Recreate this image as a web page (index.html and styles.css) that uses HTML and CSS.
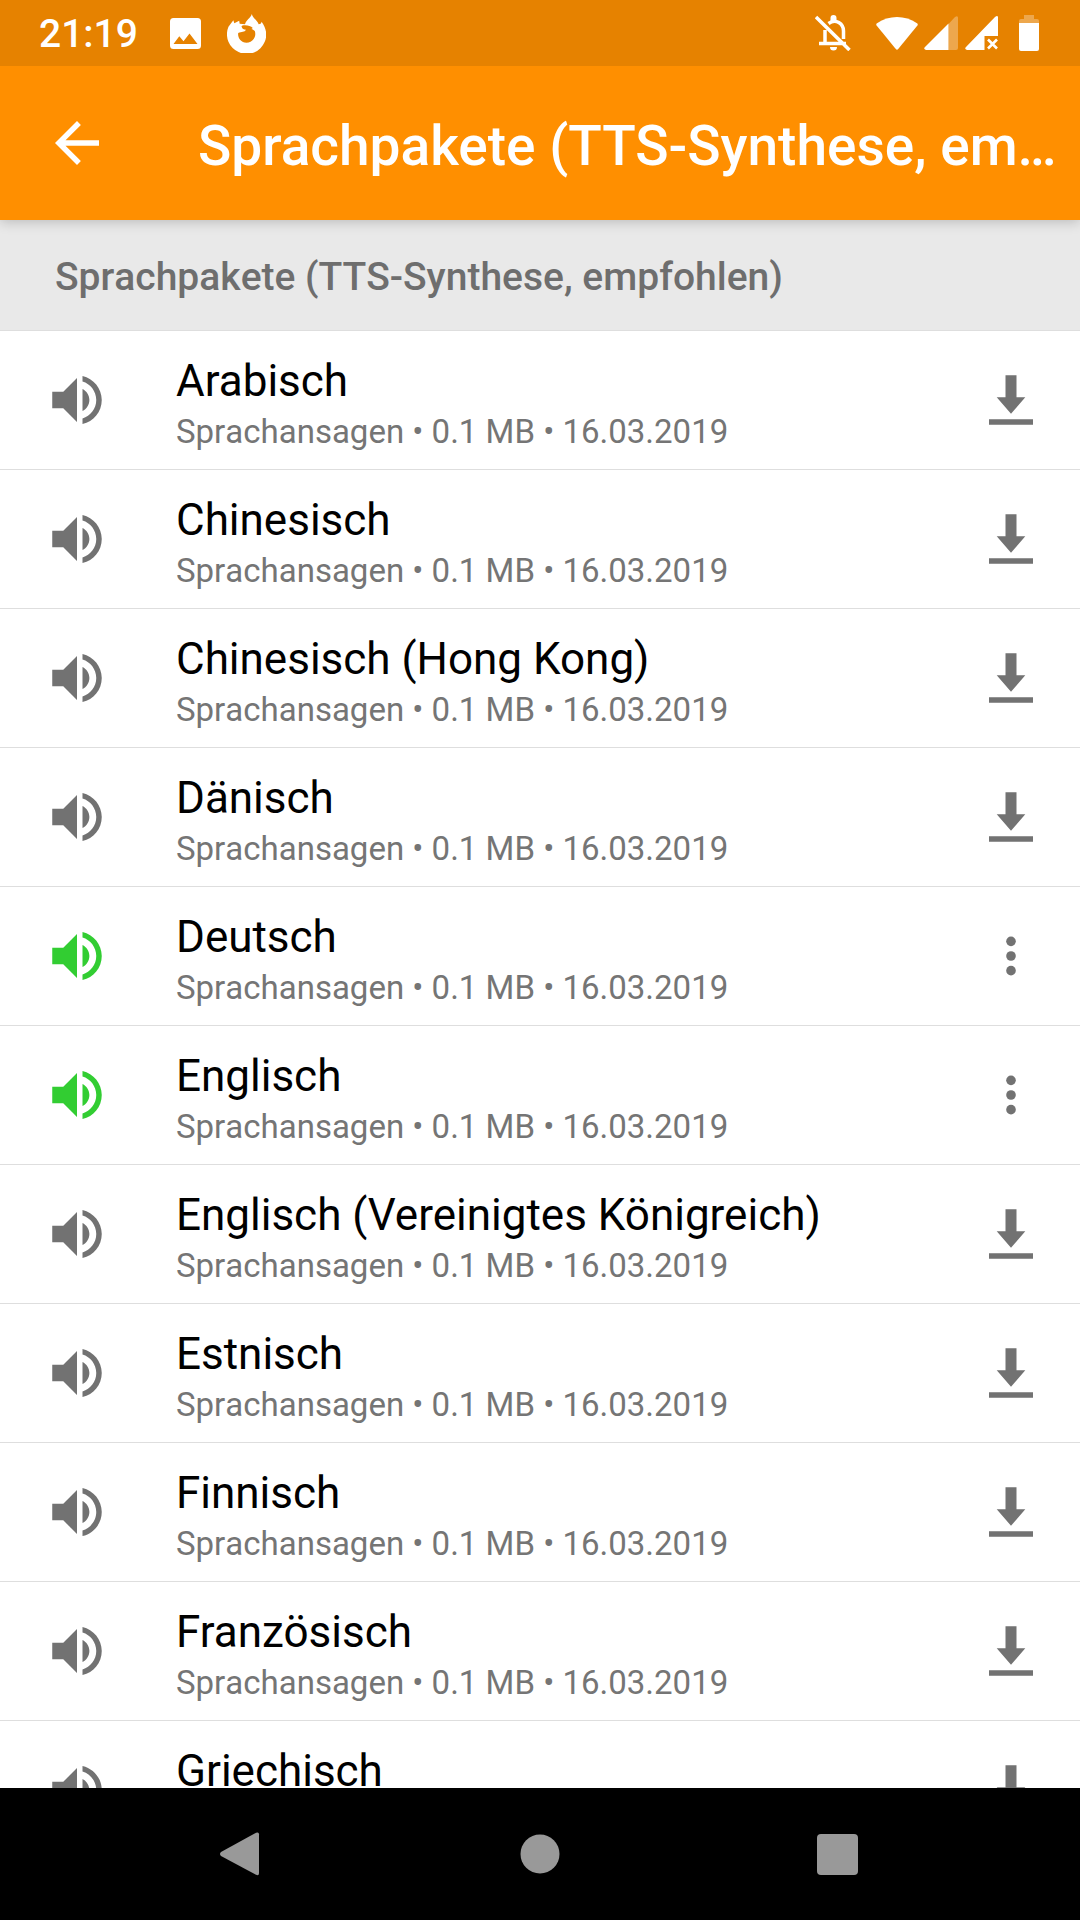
FILE: index.html
```html
<!DOCTYPE html>
<html lang="de">
<head>
<meta charset="utf-8">
<meta name="viewport" content="width=device-width, initial-scale=1">
<title>Sprachpakete</title>
<link rel="stylesheet" href="styles.css">
</head>
<body>
<svg class="sprite" aria-hidden="true">
  <symbol id="speaker" viewBox="0 0 24 24"><path d="M3 9v6h4l5 5V4L7 9H3zm13.500 3c0-1.770-1.020-3.290-2.500-4.030v8.050c1.480-.730 2.500-2.250 2.500-4.020zM14 3.230v2.060c2.890.860 5 3.540 5 6.710s-2.110 5.850-5 6.710v2.060c4.010-.910 7-4.490 7-8.770s-2.990-7.860-7-8.770z"/></symbol>
  <symbol id="download" viewBox="0 0 24 24"><path d="M4 19h16v2H4zM10 3h4v8h3.200L12 17l-5.200-6H10z"/></symbol>
  <symbol id="more" viewBox="0 0 24 24"><circle cx="12" cy="6.670" r="1.750"/><circle cx="12" cy="12" r="1.750"/><circle cx="12" cy="17.330" r="1.750"/></symbol>
</svg>
<div class="screen">
  <div class="status">
    <span class="clock">21:19</span>
    <svg class="s-image" viewBox="0 0 31 31"><path fill-rule="evenodd" d="M3.500 0h24A3.500 3.500 0 0 1 31 3.500v24a3.500 3.500 0 0 1-3.500 3.500h-24A3.500 3.500 0 0 1 0 27.500v-24A3.500 3.500 0 0 1 3.500 0zM3.500 26h24L19.500 15.500l-6 7.800-4.200-5z"/></svg>
    <svg class="s-fox" viewBox="0 0 40 40"><path fill-rule="evenodd" d="M25.500 0c.6 4 5 6 7 10.500 1.600 0 2.500-.6 3-2.500 5 7 6 14 3.200 20.500A19.500 19.500 0 1 1 1.500 13L6.500 6.500l1 3L12.500 7l.5 3c2 0 3.500.3 5.500.5C19.500 6 24.200 4.500 25.500 0zM18.500 11.500c-2.500 0-4 .8-3.500 1.500.8 2.500 2 2.700 4.500 3.200-1.500 2.800-4.500 1.600-8 3.300C10.700 24 14 29.500 20 29.500a9 9 0 0 0 8.500-12c-1.500-1.500-2-1.700-3.500-2.200l1.500-1c-2-2-4.500-2.800-8-2.800z"/></svg>
    <span class="spacer"></span>
    <svg class="s-bell" viewBox="0 0 36 36" fill="none" stroke="#fff"><path stroke-width="3.500" d="M1 2l33.500 33M4 28.500h27M10 28V15M13.500 8.500C21 3 28.500 9 28.500 16v8" fill="none"/><path fill="#fff" stroke="none" d="M15.500 6V3a3 3 0 0 1 6 0v3zM15 32h7a3.500 3.500 0 0 1-7 0z"/></svg>
    <svg class="s-wifi" viewBox="0 0 42 33"><path d="M.6 8.500Q-.3 7.200 1 6.300C13-2 29-2 41 6.300q1.300.9.4 2.200L22.200 32q-1.200 1.300-2.400 0z"/></svg>
    <svg class="s-cell" viewBox="0 0 34 34"><path opacity=".3" d="M24.500 8 31 1q3-2 3 1v30q0 2-2 2h-7.500z"/><path d="M24.500 7.500V34H2q-3-1-1-3z"/></svg>
    <svg class="s-cell2" viewBox="0 0 34 34"><path d="M33 1V20H19.500V34H2q-3-1-1-3L30 1q2.500-2 3 0z"/><path fill="none" stroke="#fff" stroke-width="2.600" d="m23 23.500 9 9m0-9-9 9"/></svg>
    <svg class="s-battery" viewBox="0 0 20 36"><path opacity=".3" d="M5 0h10v4h3q2 0 2 2v2H0V6q0-2 2-2h3z"/><path d="M0 8h20v26q0 2-2 2H2q-2 0-2-2z"/></svg>
  </div>
  <header class="appbar">
    <button class="back" aria-label="Zurück"><svg class="icon" viewBox="0 0 24 24"><path d="M20 11H7.830l5.590-5.590L12 4l-8 8 8 8 1.410-1.410L7.830 13H20z"/></svg></button>
    <h1 class="title">Sprachpakete (TTS-Synthese, empfohlen)</h1>
  </header>
  <main class="content">
    <h2 class="section">Sprachpakete (TTS-Synthese, empfohlen)</h2>
    <ul class="list" id="list"></ul>
  </main>
  <nav class="navbar">
    <button aria-label="Zurück"><svg class="icon" viewBox="0 0 66 66"><path d="M46 11.800q3-1.300 3 1.500v39q0 2.800-3 1.500L11 35q-2-2 0-4z"/></svg></button>
    <button aria-label="Startseite"><svg class="icon" viewBox="0 0 66 66"><circle cx="33" cy="33" r="19.500"/></svg></button>
    <button aria-label="Übersicht"><svg class="icon" viewBox="0 0 66 66"><rect x="13" y="13" width="41" height="41" rx="4"/></svg></button>
  </nav>
</div>
<script src="list.js"></script>
</body>
</html>
```
FILE: styles.css
```css
* { box-sizing: border-box; }
body { margin: 0; font-family: Roboto, "Noto Sans", sans-serif; background: #fff; }
button { border: 0; padding: 0; background: none; color: inherit; display: flex; align-items: center; justify-content: center; }
svg { display: block; fill: currentColor; flex: none; }
.sprite { display: none; }
.icon { width: 66px; height: 66px; }
.screen { display: flex; flex-direction: column; height: 100vh; }

.status { position: relative; z-index: 2; display: flex; align-items: center; flex: none; height: 66px; padding: 0 41px 0 39px; background: #e68200; color: #fff; }
.clock { font-size: 39px; line-height: 46px; font-weight: 500; margin-right: 32px; padding-top: 2px; }
.spacer { flex: 1; }
.s-image { width: 31px; height: 31px; margin-right: 26px; }
.s-fox { width: 39px; height: 39px; }
.s-bell { width: 36px; height: 36px; margin-right: 25px; }
.s-wifi { width: 42px; height: 33px; margin-right: 6px; }
.s-cell { width: 34px; height: 34px; margin-right: 7px; }
.s-cell2 { width: 34px; height: 34px; margin-right: 20px; }
.s-battery { width: 20px; height: 36px; }

.appbar { position: relative; display: flex; align-items: center; flex: none; height: 154px; padding: 0 22px 0 44px; gap: 88px; background: #ff8f00; color: #fff; box-shadow: 0 2px 12px rgba(0, 0, 0, .2); }
.title { flex: 1; min-width: 0; margin: 0; padding-top: 6px; font-size: 55px; line-height: 66px; font-weight: 500; white-space: nowrap; overflow: hidden; text-overflow: ellipsis; }

.content { flex: 1; min-height: 0; overflow: hidden; }
.section { margin: 0; padding: 34px 55px 30px; border-bottom: 1px solid #dedede; background: #e9e9e9; color: #6e6e6e; font-size: 39px; line-height: 46px; font-weight: 500; font-kerning: none; }
.list { margin: 0; padding: 0; list-style: none; }
.row { display: flex; align-items: center; height: 139px; padding: 0 36px 0 44px; border-bottom: 1px solid #dedede; color: #727272; }
.text { flex: 1; min-width: 0; padding: 6px 0 0 66px; }
.name { color: #000; font-size: 44px; line-height: 52px; }
.meta { color: #757575; font-size: 33px; line-height: 40px; margin-top: 5px; font-kerning: none; }
.installed { color: #32cd32; }

.navbar { display: flex; justify-content: center; flex: none; height: 132px; background: #000; color: #999; }
.navbar button { width: 27.5%; }
```
FILE: list.js
```js
const packs = [
  ["Arabisch"], ["Chinesisch"], ["Chinesisch (Hong Kong)"], ["Dänisch"],
  ["Deutsch", true], ["Englisch", true], ["Englisch (Vereinigtes Königreich)"],
  ["Estnisch"], ["Finnisch"], ["Französisch"], ["Griechisch"]
];
document.getElementById("list").innerHTML = packs.map(([name, installed]) => `
  <li class="row">
    <svg class="icon${installed ? " installed" : ""}"><use href="#speaker"/></svg>
    <div class="text"><div class="name">${name}</div><div class="meta">Sprachansagen • 0.1 MB • 16.03.2019</div></div>
    <button aria-label="${name}: ${installed ? "Optionen" : "Herunterladen"}"><svg class="icon"><use href="#${installed ? "more" : "download"}"/></svg></button>
  </li>`).join("");
```
